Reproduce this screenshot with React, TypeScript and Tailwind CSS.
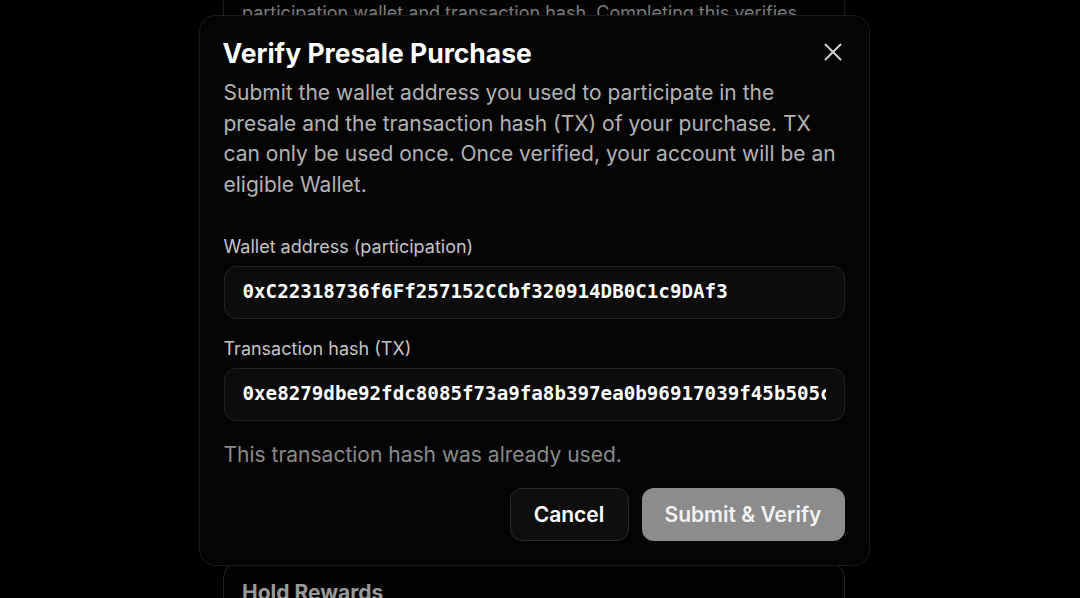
import React from 'react';
import { X } from 'lucide-react';

const sans = "font-['Inter','Noto_Sans',sans-serif]";
const mono = "font-['DejaVu_Sans_Mono','Liberation_Mono',monospace]";

export default function App() {
  return (
    <div className={`relative h-[598px] w-full overflow-hidden bg-black ${sans}`}>
      {/* page behind the dialog */}
      <div className="flex flex-col items-center pr-3">
        <div className="mt-[-60px] h-[610px] w-[622px] rounded-2xl border border-[#1c1c1c] bg-[#030303] px-[18px] pt-[30px]">
          <p className="whitespace-nowrap text-[18px] leading-[28px] text-[#7c7c7c]">
            Submit your presale details to link your
          </p>
          <p className="whitespace-nowrap text-[18px] leading-[28px] text-[#7c7c7c]">
            participation wallet and transaction hash. Completing this verifies
          </p>
        </div>
        <div className="mt-3 h-[80px] w-[622px] rounded-2xl border border-[#222] bg-[#030303] px-[18px] pt-[14px]">
          <h3 className="text-[21px] font-bold text-[#9a9a9a]">Hold Rewards</h3>
        </div>
      </div>

      {/* dialog */}
      <div className="absolute inset-0 flex items-start justify-center pr-3 pt-[15px]">
        <div className="w-[671px] rounded-2xl border border-[#1a1a1a] bg-[#040404] px-6 pb-[24px] pt-[19px]">
          <div className="flex items-start justify-between">
            <h2 className="ml-[-1px] text-[26.5px] font-bold leading-[36px] text-white">Verify Presale Purchase</h2>
            <button className="mr-[-3px] mt-[2px] text-[#d0d0d0]">
              <X className="h-[30px] w-[30px]" strokeWidth={1.6} />
            </button>
          </div>
          <p className="mt-[7px] text-[21px] leading-[30.5px] text-[#b3b3b3]">
            Submit the wallet address you used to participate in the presale and the transaction hash (TX) of your purchase. TX can only be used once. Once verified, your account will be an eligible Wallet.
          </p>

          <div className="mt-[35px] flex flex-col">
            <label className="text-[18px] leading-[24px] text-[#c4c4c4]">Wallet address (participation)</label>
            <div className="mt-[7px] flex h-[53px] items-center overflow-hidden rounded-xl border border-[#222] bg-[#0c0c0c] px-[18px]">
              <span className={`${mono} whitespace-nowrap text-[19.2px] font-bold text-white`}>
                0xC22318736f6Ff257152CCbf320914DB0C1c9DAf3
              </span>
            </div>
          </div>

          <div className="mt-[18px] flex flex-col">
            <label className="text-[18px] leading-[24px] text-[#c4c4c4]">Transaction hash (TX)</label>
            <div className="mt-[7px] flex h-[53px] items-center overflow-hidden rounded-xl border border-[#222] bg-[#0c0c0c] px-[18px]">
              <span className={`${mono} block w-full overflow-hidden whitespace-nowrap text-[19.2px] font-bold text-white`}>
                0xe8279dbe92fdc8085f73a9fa8b397ea0b96917039f45b505c1d4e2
              </span>
            </div>
          </div>

          <p className="mt-[19px] text-[21px] leading-[30px] text-[#8a8a8a]">This transaction hash was already used.</p>

          <div className="mt-[18px] flex justify-end gap-[13px]">
            <button className="h-[53px] w-[119px] rounded-xl border border-[#2a2a2a] bg-[#0e0e0e] text-[21px] font-semibold text-white">
              Cancel
            </button>
            <button className="h-[53px] w-[203px] rounded-xl bg-[#8c8c8c] text-[21px] font-semibold text-[#f2f2f2]">
              Submit &amp; Verify
            </button>
          </div>
        </div>
      </div>
    </div>
  );
}
